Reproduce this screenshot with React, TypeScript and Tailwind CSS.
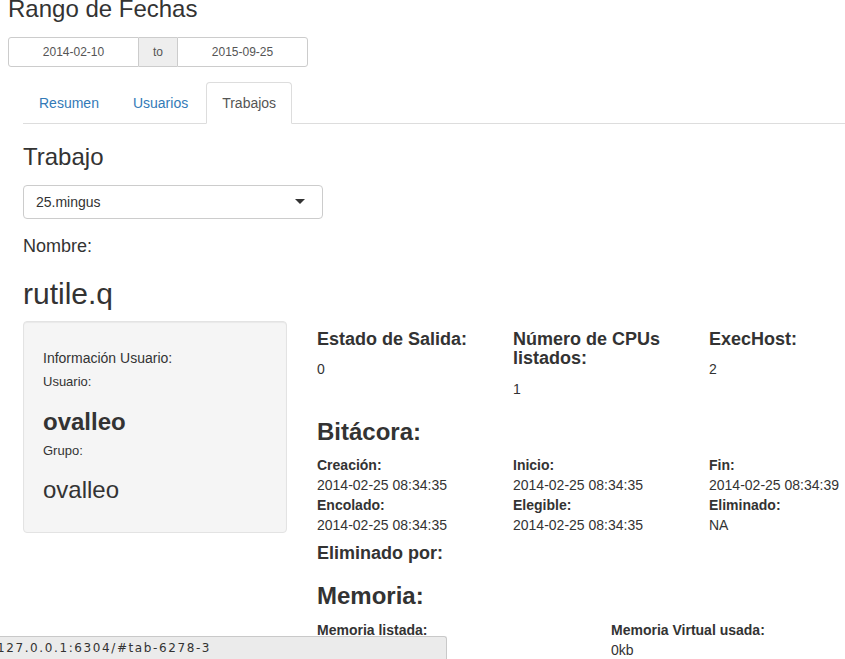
function DateRange() {
  return (
    <div className="mt-[15px] flex h-[30px] w-[300px] text-[12px] leading-[28px] text-[#555]">
      <div className="w-[131px] rounded-l-[3px] border border-[#ccc] bg-white text-center">2014-02-10</div>
      <div className="w-[38px] border-y border-[#ccc] bg-[#eee] text-center">to</div>
      <div className="w-[131px] rounded-r-[3px] border border-[#ccc] bg-white text-center">2015-09-25</div>
    </div>
  );
}

function Tabs() {
  const tabs = ["Resumen", "Usuarios", "Trabajos"];
  return (
    <ul className="flex border-b border-[#ddd]">
      {tabs.map((t) => (
        <li key={t} className="-mb-px">
          <a
            className={`mr-[2px] block rounded-t-[4px] border px-[15px] py-[10px] leading-[20px] ${
              t === "Trabajos" ? "border-[#ddd] border-b-transparent bg-white text-[#555]" : "border-transparent text-[#337ab7]"
            }`}
          >
            {t}
          </a>
        </li>
      ))}
    </ul>
  );
}

function Field({ label, value }: { label: string; value: string }) {
  return (
    <div className="w-[196px] shrink-0 px-[15px]">
      <div className="font-bold">{label}</div>
      <div className="whitespace-nowrap">{value}</div>
    </div>
  );
}

export default function App() {
  return (
    <div className="relative h-[659px] w-[845px] overflow-hidden bg-white font-['Liberation_Sans',Arial,sans-serif] text-[14px] leading-[20px] text-[#333]">
      <div className="w-[898px] px-[8px]">
        <h3 className="mt-[-4px] text-[24px] leading-[26.4px]">Rango de Fechas</h3>
        <DateRange />

        <div className="mt-[15px] pl-[15px] pr-[15px]">
          <Tabs />

          <div>
            <h3 className="mt-[20px] text-[24px] leading-[26.4px]">Trabajo</h3>

            <div className="relative mt-[14px] h-[34px] w-[300px] rounded-[4px] border border-[#ccc] bg-white px-[12px] py-[6px]">
              <span>25.mingus</span>
              <span className="absolute right-[17px] top-[13px] h-0 w-0 border-x-[5px] border-t-[5px] border-x-transparent border-t-[#333]" />
            </div>

            <h4 className="mt-[18px] text-[18px] leading-[19.8px]">Nombre:</h4>
            <h2 className="mt-[20px] text-[30px] leading-[33px]">rutile.q</h2>

            <div className="-mx-[15px] mt-[10px] flex">
              {/* info usuario */}
              <div className="w-[294px] shrink-0 px-[15px]">
                <div className="mt-px rounded-[4px] border border-[#e3e3e3] bg-[#f5f5f5] p-[19px] shadow-[inset_0_1px_1px_rgba(0,0,0,0.05)]">
                  <div className="mt-[7px] text-[14px] leading-[20px]">Información Usuario:</div>
                  <div className="mt-[4px] text-[13px] leading-[19px]">Usuario:</div>
                  <div className="mt-[18px] text-[24px] font-bold leading-[26px]">ovalleo</div>
                  <div className="mt-[6px] text-[13px] leading-[19px]">Grupo:</div>
                  <div className="mb-[10px] mt-[17px] text-[24px] leading-[26px]">ovalleo</div>
                </div>
              </div>

              {/* detalle del trabajo */}
              <div className="w-[588px] shrink-0 px-[15px]">
                <div className="-mx-[15px] flex">
                  <div className="w-[196px] shrink-0 px-[15px]">
                    <h4 className="mt-[10px] text-[18px] font-bold leading-[19.8px]">Estado de Salida:</h4>
                    <div className="mt-[10px]">0</div>
                  </div>
                  <div className="w-[196px] shrink-0 px-[15px]">
                    <h4 className="mt-[10px] text-[18px] font-bold leading-[19.8px]">Número de CPUs listados:</h4>
                    <div className="mt-[10px]">1</div>
                  </div>
                  <div className="w-[196px] shrink-0 px-[15px]">
                    <h4 className="mt-[10px] text-[18px] font-bold leading-[19.8px]">ExecHost:</h4>
                    <div className="mt-[10px]">2</div>
                  </div>
                </div>

                <h3 className="mt-[20px] text-[24px] font-bold leading-[26.4px]">Bitácora:</h3>
                <div className="-mx-[15px] mt-[9px] flex">
                  <Field label="Creación:" value="2014-02-25 08:34:35" />
                  <Field label="Inicio:" value="2014-02-25 08:34:35" />
                  <Field label="Fin:" value="2014-02-25 08:34:39" />
                </div>
                <div className="-mx-[15px] flex">
                  <Field label="Encolado:" value="2014-02-25 08:34:35" />
                  <Field label="Elegible:" value="2014-02-25 08:34:35" />
                  <Field label="Eliminado:" value="NA" />
                </div>
                <h4 className="mt-[9px] text-[18px] font-bold leading-[19.8px]">Eliminado por:</h4>

                <h3 className="mt-[20px] text-[24px] font-bold leading-[26.4px]">Memoria:</h3>
                <div className="-mx-[15px] mt-[10px] flex">
                  <div className="w-[294px] shrink-0 px-[15px]">
                    <div className="font-bold">Memoria listada:</div>
                    <div>0kb</div>
                  </div>
                  <div className="w-[294px] shrink-0 px-[15px]">
                    <div className="font-bold">Memoria Virtual usada:</div>
                    <div>0kb</div>
                  </div>
                </div>
              </div>
            </div>
          </div>
        </div>
      </div>

      {/* barra de estado del navegador */}
      <div className="absolute bottom-0 left-0 h-[23px] w-[447px] overflow-hidden rounded-tr-[3px] border-r border-t border-[#c9c9c9] bg-[#ebebeb]">
        <span className="-ml-[3px] block whitespace-nowrap font-['DejaVu_Sans',sans-serif] text-[12px] leading-[23px] tracking-[1.6px] text-[#333]">
          127.0.0.1:6304/#tab-6278-3
        </span>
      </div>
    </div>
  );
}
